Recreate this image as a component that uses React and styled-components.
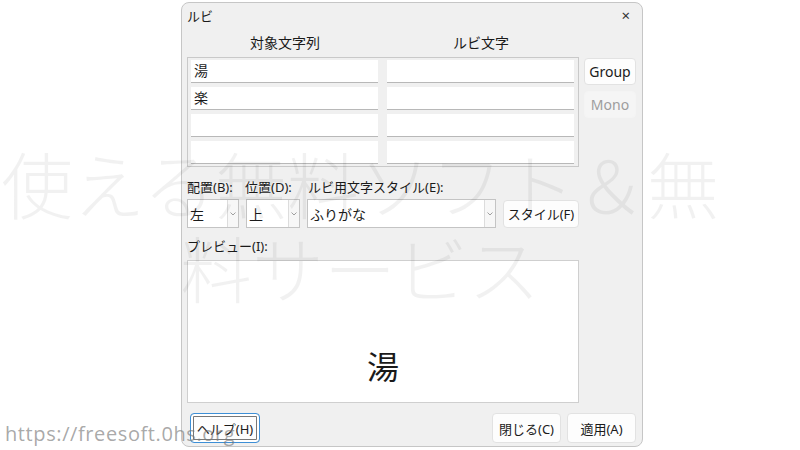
import React from "react";
import styled, { createGlobalStyle } from "styled-components";

const GlobalStyle = createGlobalStyle`
  html, body {
    margin: 0;
    padding: 0;
    background: #fff;
  }
  body {
    font-family: "Noto Sans", "Noto Sans CJK JP", sans-serif;
    color: #1a1a1a;
  }
`;

const Page = styled.div`
  position: relative;
  width: 800px;
  height: 450px;
  overflow: hidden;
  padding: 2px 0 0 181px;
  box-sizing: border-box;
`;

const Dialog = styled.div`
  width: 462px;
  height: 445px;
  box-sizing: border-box;
  background: #f0f0f0;
  border: 1px solid #c6c6c6;
  border-radius: 8px;
  padding: 0 6px 0 5px;
  display: flex;
  flex-direction: column;
  font-family: "Noto Sans", "Noto Sans CJK JP", sans-serif;
  font-size: 13px;
`;

const TitleBar = styled.div`
  height: 24px;
  display: flex;
  align-items: center;
  justify-content: space-between;
  font-size: 13px;
  padding-right: 6px;
`;

const Close = styled.span`
  font-size: 15px;
  color: #333;
`;

const Headers = styled.div`
  width: 392px;
  height: 30px;
  display: grid;
  grid-template-columns: 196px 196px;
  align-items: center;
  font-size: 14px;
  text-align: center;
`;

const GridRow = styled.div`
  display: flex;
  gap: 5px;
`;

const GridBox = styled.div`
  width: 392px;
  height: 110px;
  box-sizing: border-box;
  border: 1px solid #c9c9c9;
  padding: 2px 4px 2px 3px;
  display: grid;
  grid-template-columns: 187px 187px;
  grid-auto-rows: 23px;
  column-gap: 9px;
  row-gap: 4px;
`;

const Cell = styled.div`
  background: #fff;
  border-bottom: 1px solid #b8b8b8;
  box-sizing: border-box;
  font-size: 14px;
  line-height: 22px;
  padding-left: 3px;
`;

const SideColumn = styled.div`
  display: flex;
  flex-direction: column;
  gap: 6px;
  padding-top: 1px;
`;

const Button = styled.button`
  font-family: "Noto Sans", "Noto Sans CJK JP", sans-serif;
  font-size: ${(p) => p.$size || 13}px;
  height: ${(p) => p.$h || 28}px;
  width: ${(p) => p.$w}px;
  padding: 0;
  border-radius: 4px;
  border: 1px solid ${(p) => (p.$disabled ? "#f4f4f4" : p.$focus ? "#3d8fd6" : "#e2e2e2")};
  background: ${(p) => (p.$disabled ? "#f5f5f5" : "#fdfdfd")};
  color: ${(p) => (p.$disabled ? "#9d9d9d" : "#1a1a1a")};
  box-shadow: ${(p) => (p.$focus ? "inset 0 0 0 2px #fff, inset 0 0 0 3px #777" : "none")};
`;

const Labels = styled.div`
  display: flex;
  gap: 6px;
  margin-top: 11px;
  height: 17px;
  align-items: center;
  font-size: 13px;
`;

const Label = styled.span`
  width: ${(p) => p.$w}px;
`;

const ComboRow = styled.div`
  display: flex;
  align-items: center;
  gap: 7px;
  margin-top: 4px;
`;

const Combo = styled.div`
  width: ${(p) => p.$w}px;
  height: 29px;
  box-sizing: border-box;
  background: #fff;
  border: 1px solid #c4c4c4;
  display: flex;
  align-items: stretch;
  font-size: 14px;
`;

const ComboText = styled.span`
  flex: 1;
  display: flex;
  align-items: center;
  padding-left: 2px;
`;

const ComboArrow = styled.span`
  width: 10px;
  border-left: 1px solid #dcdcdc;
  background: #f7f7f7;
  display: flex;
  align-items: center;
  justify-content: center;
`;

const PreviewLabel = styled.div`
  margin-top: 8px;
  height: 17px;
  font-size: 13px;
`;

const Preview = styled.div`
  margin-top: 7px;
  width: 392px;
  height: 143px;
  box-sizing: border-box;
  background: #fff;
  border: 1px solid #cfcfcf;
  display: flex;
  align-items: flex-end;
  justify-content: center;
  padding-bottom: 14px;
  font-size: 32px;
  font-family: "Noto Sans CJK JP", sans-serif;
`;

const Footer = styled.div`
  display: flex;
  align-items: center;
  gap: 6px;
  margin-top: 10px;
  padding-left: 3px;
`;

const Spacer = styled.div`
  flex: 1;
`;

const Watermark = styled.div`
  position: absolute;
  left: 0;
  top: 140px;
  width: 720px;
  text-align: center;
  font-family: "Noto Sans CJK JP", sans-serif;
  font-size: 72px;
  font-weight: 300;
  line-height: 84px;
  color: rgba(0, 0, 0, 0.055);
  pointer-events: none;
`;

const SiteUrl = styled.div`
  position: absolute;
  left: 5px;
  top: 420px;
  font-family: "Open Sans", sans-serif;
  font-size: 20px;
  letter-spacing: 0.6px;
  color: rgba(120, 120, 120, 0.65);
  pointer-events: none;
`;

const Chevron = () => (
  <svg width="6" height="4" viewBox="0 0 6 4">
    <path d="M0.5 0.5 L3 3 L5.5 0.5" fill="none" stroke="#888" strokeWidth="0.8" />
  </svg>
);

const rows = [["湯", ""], ["楽", ""], ["", ""], ["", ""]];

export default function App() {
  return (
    <>
      <GlobalStyle />
      <Page>
        <Dialog>
          <TitleBar>
            <span>ルビ</span>
            <Close>×</Close>
          </TitleBar>
          <Headers>
            <span>対象文字列</span>
            <span>ルビ文字</span>
          </Headers>
          <GridRow>
            <GridBox>
              {rows.map((r, i) => (
                <React.Fragment key={i}>
                  <Cell>{r[0]}</Cell>
                  <Cell>{r[1]}</Cell>
                </React.Fragment>
              ))}
            </GridBox>
            <SideColumn>
              <Button $w={52} $h={27} $size={14}>Group</Button>
              <Button $w={52} $h={27} $size={14} $disabled>Mono</Button>
            </SideColumn>
          </GridRow>
          <Labels>
            <Label $w={52}>配置(B):</Label>
            <Label $w={57}>位置(D):</Label>
            <Label $w={180}>ルビ用文字スタイル(E):</Label>
          </Labels>
          <ComboRow>
            <Combo $w={52}>
              <ComboText>左</ComboText>
              <ComboArrow><Chevron /></ComboArrow>
            </Combo>
            <Combo $w={54}>
              <ComboText>上</ComboText>
              <ComboArrow><Chevron /></ComboArrow>
            </Combo>
            <Combo $w={189}>
              <ComboText>ふりがな</ComboText>
              <ComboArrow><Chevron /></ComboArrow>
            </Combo>
            <Button $w={76} $h={28}>スタイル(F)</Button>
          </ComboRow>
          <PreviewLabel>プレビュー(I):</PreviewLabel>
          <Preview>湯</Preview>
          <Footer>
            <Button $w={70} $h={30} $focus>ヘルプ(H)</Button>
            <Spacer />
            <Button $w={69} $h={30}>閉じる(C)</Button>
            <Button $w={69} $h={30}>適用(A)</Button>
          </Footer>
        </Dialog>
        <Watermark>使える無料ソフト＆無料サービス</Watermark>
        <SiteUrl>https://freesoft.0hs.org</SiteUrl>
      </Page>
    </>
  );
}
